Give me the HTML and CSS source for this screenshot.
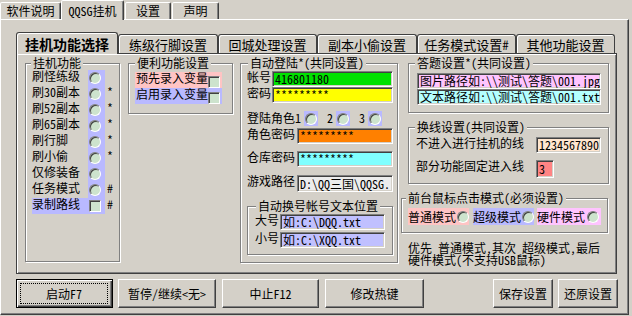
FILE: index.html
```html
<!DOCTYPE html>
<html lang="zh-CN">
<head>
<meta charset="utf-8">
<title>QQSG挂机</title>
<link rel="stylesheet" href="styles.css">
</head>
<body>
<div class="app">
  <div class="toptabs">
    <div class="ttab t1">软件说明</div>
    <div class="ttab sel">QQSG挂机</div>
    <div class="ttab t3">设置</div>
    <div class="ttab t4">声明</div>
  </div>
  <div class="outer">
    <div class="itabs">
      <div class="itab sel">挂机功能选择</div>
      <div class="itab w100">练级行脚设置</div>
      <div class="itab w99">回城处理设置</div>
      <div class="itab w100">副本小偷设置</div>
      <div class="itab w99">任务模式设置#</div>
      <div class="itab w99">其他功能设置</div>
    </div>
    <div class="panel">
      <div class="g g1">
        <div class="gl">挂机功能</div>
        <div class="opts">
          <div class="orow"><span class="olab">刷怪练级</span><span class="cell"><span class="radio"></span></span></div>
          <div class="orow"><span class="olab">刷30副本</span><span class="cell"><span class="radio"></span></span><span class="mk">*</span></div>
          <div class="orow"><span class="olab">刷52副本</span><span class="cell"><span class="radio"></span></span><span class="mk">*</span></div>
          <div class="orow"><span class="olab">刷65副本</span><span class="cell"><span class="radio"></span></span><span class="mk">*</span></div>
          <div class="orow"><span class="olab">刷行脚</span><span class="cell"><span class="radio"></span></span><span class="mk">*</span></div>
          <div class="orow"><span class="olab">刷小偷</span><span class="cell"><span class="radio"></span></span><span class="mk">*</span></div>
          <div class="orow"><span class="olab">仅修装备</span><span class="cell"><span class="radio"></span></span></div>
          <div class="orow"><span class="olab">任务模式</span><span class="cell"><span class="radio"></span></span><span class="mk">#</span></div>
          <div class="orow"><span class="olab lavbg">录制路线</span><span class="cell"><span class="check"></span></span><span class="mk">#</span></div>
        </div>
      </div>

      <div class="g g2">
        <div class="gl">便利功能设置</div>
        <div class="cv">
          <div class="crow pink"><span class="clab">预先录入变量</span><span class="check"></span></div>
          <div class="crow lavbg"><span class="clab">启用录入变量</span><span class="check"></span></div>
        </div>
      </div>

      <div class="g g3">
        <div class="gl">自动登陆*(共同设置)</div>
        <div class="g3body">
          <div class="frow"><span class="flab">帐号</span><span class="inp w121 green">416801180</span></div>
          <div class="frow"><span class="flab">密码</span><span class="inp w121 yellow">*********</span></div>
          <div class="rrow">
            <span class="rlab">登陆角色1</span><span class="rcell"><span class="radio"></span></span>
            <span class="dig">2</span><span class="rcell"><span class="radio"></span></span>
            <span class="dig">3</span><span class="rcell"><span class="radio"></span></span>
          </div>
          <div class="frow m2"><span class="flab4">角色密码</span><span class="inp w96 orange">*********</span></div>
          <div class="frow m7"><span class="flab4">仓库密码</span><span class="inp w96 cyan">*********</span></div>
          <div class="frow m8 h17"><span class="flab4">游戏路径</span><span class="inp w96 h17 grey">D:\QQ三国\QQSG.</span></div>
          <div class="g sub">
            <div class="gl">自动换号帐号文本位置</div>
            <div class="subbody">
              <div class="srow"><span class="flab">大号</span><span class="inp w105 lavin">如:C:\DQQ.txt</span></div>
              <div class="srow m2"><span class="flab">小号</span><span class="inp w105 lavin">如:C:\XQQ.txt</span></div>
            </div>
          </div>
        </div>
      </div>

      <div class="c4">
        <div class="g g4a">
          <div class="gl">答题设置*(共同设置)</div>
          <div class="g4abody">
            <span class="inp w184 magin">图片路径如:\\测试\答题\001.jpg</span>
            <span class="inp w184 lcyan">文本路径如:\\测试\答题\001.txt</span>
          </div>
        </div>
        <div class="g g4b">
          <div class="gl">换线设置(共同设置)</div>
          <div class="lrow r1"><span class="lt">不进入进行挂机的线</span><span class="inp w65 peach">1234567890</span></div>
          <div class="lrow r2"><span class="lt">部分功能固定进入线</span><span class="inp w18 h18 salmon">3</span></div>
        </div>
        <div class="g g4c">
          <div class="gl">前台鼠标点击模式(必须设置)</div>
          <div class="mrow">
            <span class="opt pink o1">普通模式<span class="radio"></span></span>
            <span class="opt lavbg o2">超级模式<span class="radio"></span></span>
            <span class="opt magbg o3">硬件模式<span class="radio"></span></span>
          </div>
        </div>
        <p class="note">优先 普通模式,其次 超级模式,最后<br>硬件模式(不支持USB鼠标)</p>
      </div>
    </div>
    <div class="btns">
      <div class="btn def b1"><span class="focus">启动F7</span></div>
      <div class="btn b2">暂停/继续&lt;无&gt;</div>
      <div class="btn b3">中止F12</div>
      <div class="btn b4">修改热键</div>
      <div class="btn b5">保存设置</div>
      <div class="btn b6">还原设置</div>
    </div>
  </div>
</div>
</body>
</html>
```

FILE: styles.css
```css
*{box-sizing:border-box;margin:0;padding:0}
html,body{background:#d4d0c8}
body{width:632px;height:316px;overflow:hidden;font-family:"Noto Sans Mono CJK SC","Noto Sans CJK SC",sans-serif;font-size:12px;line-height:12px;color:#000}

/* top tabs */
.toptabs{display:flex;align-items:flex-end;height:19px;position:relative;z-index:2}
.ttab{height:17px;border:1px solid;border-bottom:0;border-color:#fff #404040 transparent #fff;box-shadow:inset -1px 0 #808080;border-radius:2px 2px 0 0;display:flex;align-items:center;justify-content:center;background:#d4d0c8;white-space:nowrap}
.t1{width:61px}
.ttab.sel{width:63px;height:20px;margin-bottom:-1px}
.t3{width:46px;margin-left:1px}
.t4{width:47px;margin-left:1px}

/* outer page */
.outer{width:629px;height:296px;border:1px solid;border-color:#fff #404040 #404040 #fff;box-shadow:inset -1px -1px #808080;padding:12px 0 0 15px}

/* inner tabs */
.itabs{display:flex;align-items:flex-end;height:21px;position:relative;z-index:2}
.itab{height:19px;border:1px solid #404040;border-bottom:0;border-radius:3px 3px 0 0;box-shadow:inset 1px 1px #fff;display:flex;align-items:center;justify-content:center;font-size:13px;line-height:13px;background:#d4d0c8;white-space:nowrap;flex:none}
.itab.sel{width:102px;height:22px;margin-bottom:-1px;font-weight:bold;font-size:14px;line-height:14px}
.w100{width:100px}
.w99{width:99px}

/* panel */
.panel{width:601px;height:221px;border:1px solid #404040;box-shadow:inset 1px 1px #fff,inset -1px -1px #808080;display:flex;align-items:flex-start;padding:9px 0 0 8px}

/* group boxes */
.g{border:1px solid #808080;box-shadow:inset 1px 1px #fff,1px 1px #fff;flex:none}
.gl{width:max-content;height:12px;margin:-7px 0 0 6px;padding:0 2px;background:#d4d0c8;white-space:nowrap}

.radio{display:block;flex:none;width:12px;height:12px;border-radius:50%;border:1px solid;border-color:#808080 #fff #fff #808080;box-shadow:inset 1px 1px #404040;background:#cde3cd}
.check{display:block;flex:none;width:12px;height:12px;border:1px solid;border-color:#808080 #fff #fff #808080;box-shadow:inset 1px 1px #404040;background:#cde3cd}

.pink{background:#ffc4c4}
.lavbg{background:#b9b9ff}
.magbg{background:#ffc4ff}

/* group 1 */
.g1{width:95px;height:199px}
.g1 .gl{margin-left:5px}
.opts{margin:1px 0 0 6px}
.orow{display:flex;height:16px}
.olab{width:56px;height:16px}
.cell{width:17px;height:16px;background:#b9b9ff;display:flex;align-items:center}
.cell .radio,.cell .check{margin-left:1px}
.mk{margin-left:2px;width:6px}

/* group 2 */
.g2{width:105px;height:51px;margin-left:8px}
.cv{margin:3px 0 0 6px}
.crow{display:flex;width:87px;height:16px;padding-left:1px}
.clab{width:72px}
.crow .check{margin-top:4px}

/* group 3 */
.g3{width:158px;height:200px;margin-left:7px}
.g3 .gl{margin-left:7px}
.g3body{margin:2px 0 0 6px}
.frow{display:flex;height:16px}
.frow.h17{height:17px}
.flab{width:25px;flex:none}
.flab4{width:50px;flex:none}
.m2{margin-top:2px}
.m7{margin-top:7px}
.m8{margin-top:8px}

.inp{display:flex;align-items:center;flex:none;height:16px;border:1px solid;border-color:#808080 #fff #fff #808080;box-shadow:inset 1px 1px #404040,inset -1px -1px #d4d0c8;padding-left:2px;white-space:nowrap;overflow:hidden;font-family:"Noto Sans Mono CJK SC","Liberation Mono","Noto Sans CJK SC",monospace;font-size:12px;line-height:12px}
.h17{height:17px}
.h18{height:18px}
.w121{width:121px}
.w96{width:96px}
.w105{width:105px}
.w184{width:184px}
.w65{width:65px}
.w18{width:18px}
.green{background:#00e100}
.yellow{background:#ffff00}
.orange{background:#ff8000}
.cyan{background:#80ffff}
.grey{background:#ececec}
.lavin{background:#c0c0ff}
.magin{background:#ffc4ff}
.lcyan{background:#b4ffff}
.peach{background:#ffe6cf}
.salmon{background:#ff8484}

.rrow{display:flex;height:15px;margin-top:8px}
.rlab{width:57px;padding-top:1px}
.rcell{width:14px;height:15px;background:#b9b9ff;display:flex;align-items:center;justify-content:center}
.dig{width:6px;margin:0 3px 0 9px;padding-top:1px}

.sub{margin-top:14px;width:146px;height:49px}
.sub .gl{margin-left:8px}
.subbody{margin:2px 0 0 7px}
.srow{display:flex;height:16px}

/* column 4 */
.c4{margin-left:3px;width:207px;display:flex;flex-direction:column;flex:none}
.g4a{margin-left:7px;width:201px;height:50px}
.g4abody{margin:4px 0 0 8px}
.g4b{margin:14px 0 0 7px;width:201px;height:57px}
.lrow{display:flex;padding-left:7px}
.lrow .lt{width:120px}
.r1{margin-top:4px}
.r2{margin-top:7px}
.g4c{margin-top:14px;width:207px;height:35px}
.g4c .gl{margin-left:4px}
.mrow{display:flex;margin:4px 0 0 6px}
.opt{display:flex;align-items:center;height:17px;padding-top:1px}
.opt .radio{margin-left:1px}
.o1{width:61px}
.o2{width:61px;margin-left:4px}
.o3{width:64px;margin-left:3px}
.o3 .radio{margin-left:2px}
.note{margin:9px 0 0 7px;line-height:12px;white-space:nowrap}

/* buttons */
.btns{display:flex;margin-top:5px;height:29px}
.btn{height:29px;flex:none;border:1px solid;border-color:#fff #404040 #404040 #fff;box-shadow:inset -1px -1px #808080;display:flex;align-items:center;justify-content:center;white-space:nowrap}
.btn.def{border-color:#000;box-shadow:inset 1px 1px #fff,inset -1px -1px #404040,inset -2px -2px #808080;padding:3px 4px 3px 3px;align-items:stretch}
.focus{flex:1;border:1px dotted #000;display:flex;align-items:center;justify-content:center}
.b1{width:97px}
.b2{width:98px;margin-left:5px}
.b3{width:97px;margin-left:6px}
.b4{width:99px;margin-left:6px}
.b5{width:60px;margin-left:69px}
.b6{width:60px;margin-left:5px}
```
